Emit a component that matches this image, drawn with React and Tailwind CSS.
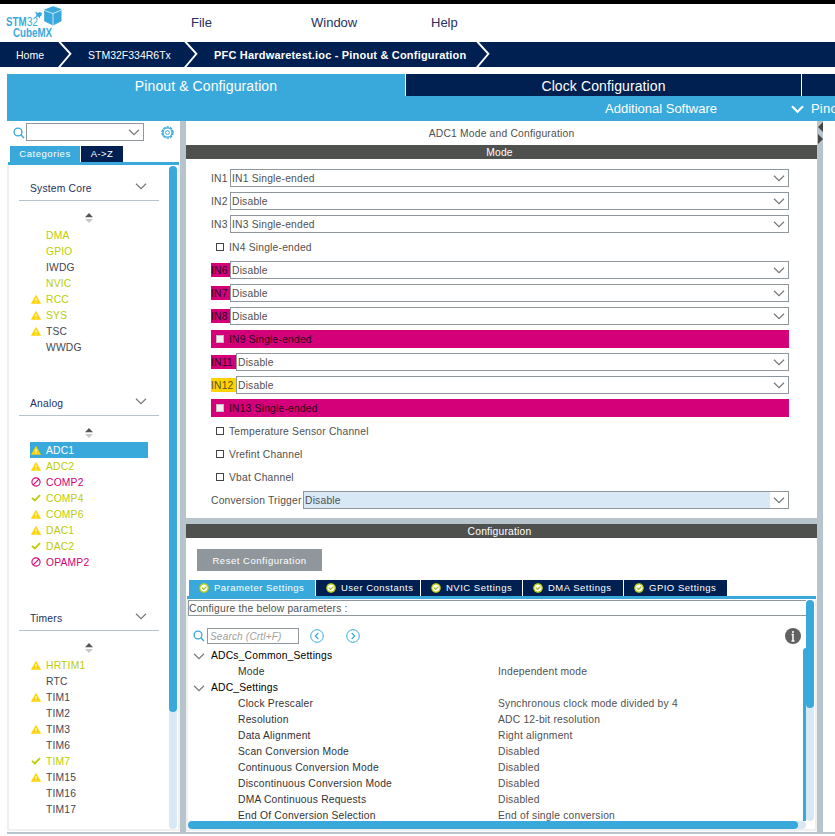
const sections = [
  {
    title: 'System Core',
    items: [
      { name: 'DMA', tone: 'green' },
      { name: 'GPIO', tone: 'green' },
      { name: 'IWDG' },
      { name: 'NVIC', tone: 'green' },
      { name: 'RCC', tone: 'green', icon: 'warn' },
      { name: 'SYS', tone: 'green', icon: 'warn' },
      { name: 'TSC', icon: 'warn' },
      { name: 'WWDG' },
    ],
  },
  {
    title: 'Analog',
    items: [
      { name: 'ADC1', tone: 'active', icon: 'warn' },
      { name: 'ADC2', tone: 'green', icon: 'warn' },
      { name: 'COMP2', tone: 'pink', icon: 'ban' },
      { name: 'COMP4', tone: 'green', icon: 'check' },
      { name: 'COMP6', tone: 'green', icon: 'warn' },
      { name: 'DAC1', tone: 'green', icon: 'warn' },
      { name: 'DAC2', tone: 'green', icon: 'check' },
      { name: 'OPAMP2', tone: 'pink', icon: 'ban' },
    ],
  },
  {
    title: 'Timers',
    items: [
      { name: 'HRTIM1', tone: 'green', icon: 'warn' },
      { name: 'RTC' },
      { name: 'TIM1', icon: 'warn' },
      { name: 'TIM2' },
      { name: 'TIM3', icon: 'warn' },
      { name: 'TIM6' },
      { name: 'TIM7', tone: 'green', icon: 'check' },
      { name: 'TIM15', icon: 'warn' },
      { name: 'TIM16' },
      { name: 'TIM17' },
    ],
  },
];

const tones = {
  green: 'text-[#bbcc00]',
  pink: 'text-[#d4007a]',
  active: 'bg-[#39a9dc] text-white',
  plain: 'text-[#464650]',
};

const modeRows = [
  { label: 'IN1', value: 'IN1 Single-ended' },
  { label: 'IN2', value: 'Disable' },
  { label: 'IN3', value: 'IN3 Single-ended' },
  { check: 'IN4 Single-ended' },
  { label: 'IN6', value: 'Disable', state: 'conflict' },
  { label: 'IN7', value: 'Disable', state: 'conflict' },
  { label: 'IN8', value: 'Disable', state: 'conflict' },
  { check: 'IN9 Single-ended', state: 'conflict' },
  { label: 'IN11', value: 'Disable', state: 'conflict', size: 'w-[25px]' },
  { label: 'IN12', value: 'Disable', state: 'partial', size: 'w-[25px]' },
  { check: 'IN13 Single-ended', state: 'conflict' },
  { check: 'Temperature Sensor Channel' },
  { check: 'Vrefint Channel' },
  { check: 'Vbat Channel' },
  { label: 'Conversion Trigger', value: 'Disable', size: 'w-[92px]', focused: true },
];

const labelStates = {
  conflict: 'bg-[#d4007a] text-[#2a0018]',
  partial: 'bg-[#ffd300] text-[#5a5020]',
};

const settingsTabs = [
  { name: 'Parameter Settings', size: 'w-[126px]' },
  { name: 'User Constants', size: 'w-[104px]' },
  { name: 'NVIC Settings', size: 'w-[101px]' },
  { name: 'DMA Settings', size: 'w-[100px]' },
  { name: 'GPIO Settings', size: 'w-[103px]' },
];

const params = [
  { group: 'ADCs_Common_Settings' },
  { name: 'Mode', value: 'Independent mode' },
  { group: 'ADC_Settings' },
  { name: 'Clock Prescaler', value: 'Synchronous clock mode divided by 4' },
  { name: 'Resolution', value: 'ADC 12-bit resolution' },
  { name: 'Data Alignment', value: 'Right alignment' },
  { name: 'Scan Conversion Mode', value: 'Disabled' },
  { name: 'Continuous Conversion Mode', value: 'Disabled' },
  { name: 'Discontinuous Conversion Mode', value: 'Disabled' },
  { name: 'DMA Continuous Requests', value: 'Disabled' },
  { name: 'End Of Conversion Selection', value: 'End of single conversion' },
];

function Chevron({ className = '' }) {
  return (
    <svg width="12" height="8" viewBox="0 0 12 8" fill="none" className={`shrink-0 ${className}`}>
      <path d="M1 1.8 6 6.6 11 1.8" stroke="#77797b" strokeWidth="1.2" />
    </svg>
  );
}

function SearchIcon() {
  return (
    <svg width="12" height="12" viewBox="0 0 12 12" fill="none" stroke="#39a9dc" className="shrink-0">
      <circle cx="5" cy="5" r="3.9" strokeWidth="1.4" />
      <path d="M7.8 7.8 11 11" strokeWidth="1.5" />
    </svg>
  );
}

function StatusIcon({ type }) {
  if (type === 'warn') {
    return (
      <svg width="10" height="9" viewBox="0 0 10 9">
        <path d="M5 .3 9.7 8.6H.3Z" fill="#ffd300" stroke="#ffd300" strokeWidth=".5" strokeLinejoin="round" />
        <path d="M5 3v2.9M5 6.7v1" stroke="#fff" strokeWidth="1" />
      </svg>
    );
  }
  if (type === 'ban') {
    return (
      <svg width="10" height="10" viewBox="0 0 10 10" fill="none" stroke="#d4007a" strokeWidth="1.1">
        <circle cx="5" cy="5" r="4.1" />
        <path d="M2.2 7.8 7.8 2.2" />
      </svg>
    );
  }
  if (type === 'check') {
    return (
      <svg width="10" height="8" viewBox="0 0 10 8" fill="none">
        <path d="M1 3.8 3.8 6.4 9 1.2" stroke="#bbcc00" strokeWidth="1.8" />
      </svg>
    );
  }
  return null;
}

function Logo() {
  return (
    <svg width="60" height="38" viewBox="0 0 60 38" fill="#39a9dc" fontFamily="Liberation Sans, Arial, sans-serif">
      <text x="0" y="22" fontSize="12.5" fontWeight="bold" textLength="20.5" lengthAdjust="spacingAndGlyphs">STM</text>
      <text x="21" y="22" fontSize="12.5" textLength="11" lengthAdjust="spacingAndGlyphs">32</text>
      <text x="7" y="32.5" fontSize="12.5" fontWeight="bold" textLength="39" lengthAdjust="spacingAndGlyphs">CubeMX</text>
      <path d="M29 7.5 32 9 33.5 8 36 9 35.5 11.5 34 12.5 34 14.5 32 12.5 29 13.5 30.6 11Z" />
      <path d="M47 2.7 55 5.4V17L47 21 38.7 17V5.9Z" stroke="#39a9dc" strokeLinejoin="round" />
      <path d="M38.5 6.5 47 9.5 55.5 6M47 9.5V21" stroke="#fff" strokeWidth=".7" fill="none" />
    </svg>
  );
}

function CrumbArrow() {
  return (
    <svg width="14" height="25" viewBox="0 0 14 25" fill="none" className="shrink-0">
      <path d="M1.2 -.5 12.4 11.8 .8 25.5" stroke="#fff" strokeWidth="1.9" />
    </svg>
  );
}

function Header() {
  return (
    <>
      <div className="h-1 shrink-0 bg-black" />
      <header className="flex h-[38px] shrink-0 items-center text-[13px] text-[#25305f]">
        <div className="w-[191px] pl-1.5"><Logo /></div>
        <span className="w-[120px]">File</span>
        <span className="w-[120px]">Window</span>
        <span>Help</span>
      </header>
      <nav className="flex h-[25px] shrink-0 items-center bg-[#002052] text-[10.5px] text-white">
        <span className="w-[58px] pt-0.5 pl-4">Home</span>
        <CrumbArrow />
        <span className="w-[112px] pt-0.5 pl-4">STM32F334R6Tx</span>
        <CrumbArrow />
        <span className="w-[278px] pt-px pl-4 text-[11px] font-bold tracking-[0.19px] whitespace-nowrap">
          PFC Hardwaretest.ioc - Pinout &amp; Configuration
        </span>
        <CrumbArrow />
      </nav>
    </>
  );
}

function MainTabs() {
  return (
    <div className="mt-[7px] ml-[7px] shrink-0 text-white">
      <div className="flex h-[22px] gap-px text-[14px] leading-[24px] tracking-[0.1px]">
        <div className="w-[398px] bg-[#39a9dc] text-center">Pinout &amp; Configuration</div>
        <div className="w-[395px] bg-[#002052] text-center">Clock Configuration</div>
        <div className="flex-1 bg-[#002052]" />
      </div>
      <div className="flex h-[25px] items-center overflow-hidden bg-[#39a9dc] pl-[598px] text-[13px]">
        <span className="w-[186px] shrink-0">Additional Software</span>
        <svg width="13" height="9" viewBox="0 0 13 9" fill="none" className="mt-0.5 mr-[7px] shrink-0">
          <path d="M1 1.2 6.5 6.7 12 1.2" stroke="#fff" strokeWidth="2.2" />
        </svg>
        <span className="shrink-0 pt-px tracking-[0.2px]">Pinout</span>
      </div>
    </div>
  );
}

function Section({ title, items }) {
  return (
    <div className="h-[215px] shrink-0 pl-2.5">
      <div className="flex h-7 w-[140px] items-center border-b border-[#b8c4cb] pr-3 pl-[11px] text-[#25305f]">
        <span className="flex-1 pt-[5px]">{title}</span>
        <Chevron className="mb-0.5" />
      </div>
      <div className="flex h-[26px] w-[139px] items-center justify-center pt-2">
        <svg width="8" height="10" viewBox="0 0 8 10">
          <path d="M4 0 8 4.2H0Z" fill="#555" />
          <path d="M0 6H8L4 10Z" fill="#c8c8c8" />
        </svg>
      </div>
      {items.map((item) => (
        <div key={item.name} className={`ml-[11px] flex h-4 w-[118px] items-center ${tones[item.tone || 'plain']}`}>
          <span className="w-4 pl-px"><StatusIcon type={item.icon} /></span>
          <span className="pt-px">{item.name}</span>
        </div>
      ))}
    </div>
  );
}

function Sidebar() {
  return (
    <aside className="flex w-[173px] shrink-0 flex-col">
      <div className="flex h-[25px] shrink-0 items-start pl-1.5">
        <div className="mt-1.5"><SearchIcon /></div>
        <div className="mt-0.5 ml-px flex h-[18px] w-[118px] items-center justify-end border border-[#8f979d] pr-[3px]">
          <Chevron />
        </div>
        <svg width="13" height="13" viewBox="0 0 13 13" fill="none" stroke="#39a9dc" className="mt-[5px] ml-[17px]">
          <circle cx="6.5" cy="6.5" r="5.5" strokeWidth="1.4" strokeDasharray="2.6 .85" />
          <circle cx="6.5" cy="6.5" r="4.5" strokeWidth="1.2" />
          <circle cx="6.5" cy="6.5" r="1.9" strokeWidth="1" />
        </svg>
      </div>
      <div className="ml-[3px] flex h-4 shrink-0 gap-px text-center text-[9.5px] leading-[16px] text-white">
        <div className="w-[70px] bg-[#39a9dc] tracking-[0.55px]">Categories</div>
        <div className="w-[42px] bg-[#002052] tracking-[0.4px]">A-&gt;Z</div>
      </div>
      <div className="ml-px h-[3px] w-[171px] shrink-0 bg-[#39a9dc]" />
      <div className="flex h-[666px] shrink-0 border-x-2 border-b-2 border-[#f0f0f0]">
        <div className="flex flex-1 flex-col overflow-hidden pt-2">
          {sections.map((s) => (
            <Section key={s.title} {...s} />
          ))}
        </div>
        <div className="mt-px mr-px h-[663px] w-2 rounded-full bg-[#d9e8f5]">
          <div className="h-[546px] rounded-full bg-[#39a9dc]" />
        </div>
      </div>
      <div className="mt-px h-0.5 shrink-0 bg-[#b8c4cb]" />
    </aside>
  );
}

function ModeRow({ row }) {
  if (row.check) {
    const conflict = row.state === 'conflict';
    return (
      <div className={`flex h-[18px] items-center pl-[5px] ${conflict ? 'bg-[#d4007a] text-[#2a0018]' : ''}`}>
        <span className={`size-2 border ${conflict ? 'border-[#c9b9c2] bg-[#f0f0f0]' : 'border-[#444]'}`} />
        <span className="pt-px pl-[5px]">{row.check}</span>
      </div>
    );
  }
  return (
    <div className="flex h-[18px] items-center">
      <span className={`h-3.5 shrink-0 leading-[15px] whitespace-nowrap ${row.size || 'w-[19px]'} ${labelStates[row.state] || ''}`}>
        {row.label}
      </span>
      <div className={`flex h-[18px] flex-1 items-center border border-[#8f979d] ${row.focused ? 'bg-[#d9e8f5]' : 'bg-white'}`}>
        <span className="flex-1 pt-px pl-px">{row.value}</span>
        <span className="flex h-4 items-center bg-white px-[3px]"><Chevron /></span>
      </div>
    </div>
  );
}

function ModePanel() {
  return (
    <section className="h-[397px] shrink-0">
      <div className="h-6 text-center leading-[25px]">ADC1 Mode and Configuration</div>
      <div className="h-3.5 bg-[#4f514f] pr-1 text-center leading-[15px] text-white">Mode</div>
      <div className="flex flex-col gap-[5px] pt-2.5 pr-7 pl-[25px]">
        {modeRows.map((row) => (
          <ModeRow key={row.check || row.label} row={row} />
        ))}
      </div>
    </section>
  );
}

function CircleArrow({ d }) {
  return (
    <svg width="14" height="14" viewBox="0 0 14 14" fill="none" stroke="#39a9dc">
      <circle cx="7" cy="7" r="6.3" strokeWidth="1" />
      <path d={d} strokeWidth="1.2" />
    </svg>
  );
}

function ParamTree() {
  return (
    <div className="flex-1 overflow-hidden">
      {params.map((p) =>
        p.group ? (
          <div key={p.group} className="flex h-4 items-center pl-[5px] text-black">
            <Chevron />
            <span className="pl-1.5">{p.group}</span>
          </div>
        ) : (
          <div key={p.name} className="flex h-4 items-center pl-[50px]">
            <span className="w-[260px] text-[#333]">{p.name}</span>
            <span>{p.value}</span>
          </div>
        )
      )}
    </div>
  );
}

function ConfigPanel() {
  return (
    <section className="flex min-h-0 flex-1 flex-col">
      <div className="h-3.5 shrink-0 bg-[#4f514f] pr-1 text-center leading-[15px] text-white">Configuration</div>
      <div className="mt-[11px] ml-[11px] h-[22px] w-[125px] shrink-0 bg-[#8f979d] text-center text-[9.5px] leading-[24px] tracking-[0.53px] text-white">
        Reset Configuration
      </div>
      <div className="mt-[9px] ml-[3px] flex h-4 shrink-0 gap-px text-[9.5px] text-white">
        {settingsTabs.map((tab, i) => (
          <div
            key={tab.name}
            className={`flex items-center pl-2.5 whitespace-nowrap tracking-[0.5px] ${tab.size} ${i === 0 ? 'bg-[#39a9dc]' : 'bg-[#002052]'}`}
          >
            <svg width="10" height="10" viewBox="0 0 10 10" className="mr-[5px] mb-px shrink-0">
              <circle cx="5" cy="5" r="4.2" fill="#fff" stroke="#bbcc00" strokeWidth="1.2" />
              <path d="M2.8 4.7 4.6 6.5 7.4 3.7" stroke="#aaba00" strokeWidth="1.2" fill="none" />
            </svg>
            <span className="pt-px">{tab.name}</span>
          </div>
        ))}
      </div>
      <div className="ml-px h-[3px] w-[629px] shrink-0 bg-[#39a9dc]" />
      <div className="flex h-[232px] shrink-0 border-x-2 border-b-2 border-[#f0f0f0] pt-px">
        <div className="flex w-[618px] flex-col">
          <div className="h-4 shrink-0 border border-r-0 border-[#8f979d] leading-[15px]">
            Configure the below parameters :
          </div>
          <div className="flex h-8 shrink-0 items-center pt-2 pl-[5px]">
            <SearchIcon />
            <div className="ml-[2px] h-4 w-[92px] border border-[#8f979d] pl-0.5 text-[10px] leading-[15px] tracking-[0.2px] text-[#a0a0a0] italic">
              Search (Crtl+F)
            </div>
            <div className="ml-[11px] flex gap-[22px]">
              <CircleArrow d="M8.3 4 5.3 7 8.3 10" />
              <CircleArrow d="M5.7 4 8.7 7 5.7 10" />
            </div>
            <svg width="16" height="16" viewBox="0 0 16 16" className="mr-[5px] ml-auto">
              <circle cx="8" cy="8" r="8" fill="#616161" />
              <path d="M8 3v2M6.6 6.5H8V13M6.5 13H9.5" stroke="#fff" strokeWidth="1.5" fill="none" />
            </svg>
          </div>
          <div className="flex h-[173px] shrink-0">
            <ParamTree />
            <div className="w-[3px] rounded-tl-sm bg-[#39a9dc]" />
          </div>
          <div className="h-2 shrink-0 rounded-full bg-[#d9e8f5]">
            <div className="h-2 w-[610px] rounded-full bg-[#39a9dc]" />
          </div>
        </div>
        <div className="h-[221px] w-2 rounded-full bg-[#d9e8f5]">
          <div className="h-[108px] rounded-full bg-[#39a9dc]" />
        </div>
      </div>
      <div className="mt-px h-0.5 shrink-0 bg-[#b8c4cb]" />
    </section>
  );
}

export default function App() {
  return (
    <div className="flex h-[836px] w-[835px] flex-col overflow-hidden bg-white font-['Liberation_Sans',Arial,sans-serif]">
      <Header />
      <MainTabs />
      <main className="ml-[7px] flex h-[713px] shrink-0 text-[10.3px] tracking-[0.2px] text-[#505050]">
        <Sidebar />
        <div className="w-1.5 shrink-0 bg-[#b8c4cb]" />
        <div className="flex w-[631px] shrink-0 flex-col">
          <ModePanel />
          <div className="h-1.5 shrink-0 bg-[#b8c4cb]" />
          <ConfigPanel />
        </div>
        <div className="w-1.5 shrink-0 bg-[#b8c4cb]">
          <svg width="6" height="24" viewBox="0 0 6 24" fill="#444">
            <path d="M6 1V11L1 6ZM1 13V23L6 18Z" />
          </svg>
        </div>
        <div className="flex-1 border-b-2 border-[#b8c4cb]" />
      </main>
    </div>
  );
}
